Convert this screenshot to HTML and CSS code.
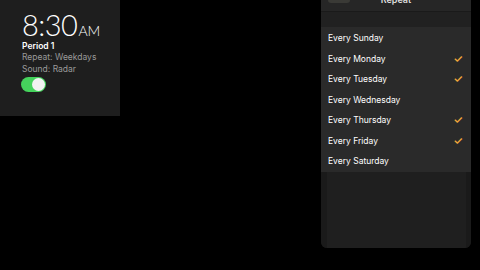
FILE: index.html
```html
<!DOCTYPE html>
<html>
<head>
<meta charset="utf-8">
<link rel="stylesheet" href="styles.css">
</head>
<body>
<div class="stage">
  <div class="alarm">
    <div class="time"><span class="digits">8:30</span><span class="ampm">AM</span></div>
    <div class="label">Period 1</div>
    <div class="meta">Repeat: Weekdays</div>
    <div class="meta">Sound: Radar</div>
    <div class="toggle"><span class="knob"></span></div>
  </div>
  <div class="sheet">
    <div class="titlebar">
      <span class="back"></span>
      <span class="title">Repeat</span>
    </div>
    <div class="band"></div>
    <ul class="days">
      <li class="day">Every Sunday</li>
      <li class="day on">Every Monday<span class="check">&#10003;</span></li>
      <li class="day on">Every Tuesday<span class="check">&#10003;</span></li>
      <li class="day">Every Wednesday</li>
      <li class="day on">Every Thursday<span class="check">&#10003;</span></li>
      <li class="day on">Every Friday<span class="check">&#10003;</span></li>
      <li class="day">Every Saturday</li>
    </ul>
    <div class="rest"></div>
  </div>
</div>
</body>
</html>
```
FILE: styles.css
```css
html, body {
  margin: 0;
  padding: 0;
  background: #000;
  width: 480px;
  height: 270px;
  overflow: hidden;
  font-family: Inter, "Liberation Sans", sans-serif;
}
.stage {
  display: flex;
  align-items: flex-start;
}
.alarm {
  width: 98px;
  height: 116px;
  padding-left: 22px;
  background: #1e1e1e;
  box-sizing: content-box;
  display: flex;
  flex-direction: column;
  align-items: flex-start;
}
.time {
  margin-top: 10px;
  color: #fff;
  display: flex;
  align-items: baseline;
  height: 29px;
  line-height: 1;
}
.digits {
  font-family: Lato, "Open Sans", sans-serif;
  font-weight: 300;
  font-size: 29px;
  line-height: 29px;
  letter-spacing: -0.5px;
}
.ampm {
  font-family: Lato, "Open Sans", sans-serif;
  font-weight: 300;
  font-size: 14px;
  line-height: 14px;
  margin-left: 1px;
}
.label {
  margin-top: 2px;
  color: #fff;
  font-size: 8.5px;
  font-weight: 600;
  line-height: 11px;
}
.meta {
  color: #9a9a9a;
  font-size: 8.5px;
  line-height: 11.5px;
}
.toggle {
  margin-top: 2px;
  margin-left: -1px;
  width: 25px;
  height: 15px;
  border-radius: 8px;
  background: #45d35c;
  display: flex;
  justify-content: flex-end;
  align-items: center;
}
.knob {
  width: 13px;
  height: 13px;
  border-radius: 50%;
  background: #f2f2f2;
  margin-right: 1px;
}
.sheet {
  margin-left: 201px;
  width: 150px;
  height: 248px;
  background: #1c1c1c;
  border-radius: 0 0 6px 6px;
  box-shadow: inset 6px 0 0 #1a1a1a, inset -5px 0 0 #1a1a1a;
  display: flex;
  flex-direction: column;
  overflow: hidden;
}
.titlebar {
  height: 11px;
  background: #262626;
  position: relative;
  display: flex;
  justify-content: center;
  align-items: flex-end;
}
.back {
  position: absolute;
  left: 7px;
  top: 0;
  width: 22px;
  height: 3px;
  border-radius: 0 0 3px 3px;
  background: #3a3a36;
}
.title {
  color: #ddd;
  font-size: 9px;
  font-weight: 600;
  line-height: 9px;
  margin-bottom: 7px;
}
.band {
  height: 15px;
  background: #212121;
  border-top: 1px solid #1a1a1a;
}
.days {
  list-style: none;
  margin: 0;
  padding: 1px 0 0 7px;
  background: #2a2a2a;
}
.day {
  height: 20.5px;
  display: flex;
  align-items: center;
  justify-content: space-between;
  padding-right: 8px;
  color: #fff;
  font-size: 8.5px;
}
.check {
  color: #f0a63a;
  font-size: 11px;
  font-weight: 600;
}
.rest {
  flex: 1;
  background: #1f1f1f;
  margin: 0 5px 0 6px;
}
```
